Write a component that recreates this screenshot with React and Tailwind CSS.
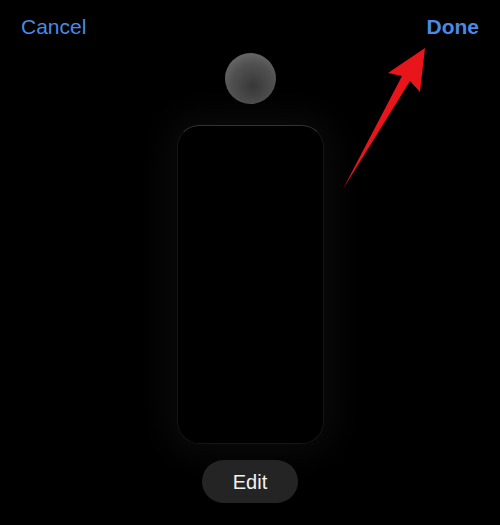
import { useState } from 'react'

function Arrow() {
  return (
    <svg className="pointer-events-none absolute left-0 top-0" width="500" height="525" viewBox="0 0 500 525">
      <polygon points="425,48 388,73 402,76 343,189 410,81 420,92" fill="#e8161b" />
    </svg>
  )
}

export default function App() {
  const [editing] = useState(false)

  return (
    <div
      className="relative flex h-[525px] w-[500px] flex-col items-center overflow-hidden bg-black"
      style={{ fontFamily: '"Liberation Sans", Arial, sans-serif' }}
    >
      <div className="flex w-full items-start justify-between px-[21px] pt-[13px]">
        <button className="text-[21px] leading-[28px] text-[#4a8ae6]" type="button">
          Cancel
        </button>
        <button className="text-[21px] font-bold leading-[28px] text-[#4a8ae6]" type="button">
          Done
        </button>
      </div>

      <div className="mt-[12px] h-[51px] w-[51px] rounded-full bg-[radial-gradient(circle_at_55%_65%,#383838_0%,#505050_50%,#7a7a7a_100%)]" />

      <div className="mt-[21px] h-[319px] w-[147px] rounded-[22px] border border-[#151515] border-t-[#333] bg-black shadow-[0_0_30px_14px_rgba(255,255,255,0.035)]" />

      <button
        className="mt-[16px] flex h-[43px] w-[96px] items-center justify-center rounded-full bg-[#242424] text-[20px] text-[#f2f2f2]"
        type="button"
      >
        {editing ? 'Editing' : 'Edit'}
      </button>

      <Arrow />
    </div>
  )
}
